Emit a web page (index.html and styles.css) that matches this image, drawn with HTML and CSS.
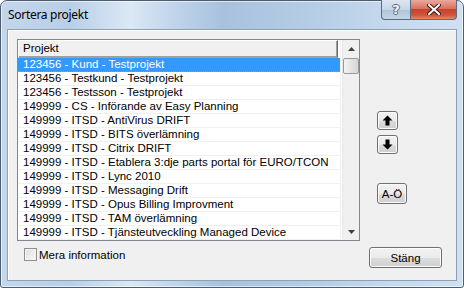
FILE: index.html
```html
<!DOCTYPE html>
<html>
<head>
<meta charset="utf-8">
<link rel="stylesheet" href="styles.css">
</head>
<body>
<div class="window">
  <div class="titlebar">
    <span class="title">Sortera projekt</span>
    <div class="caption-btns">
      <div class="cbtn help">?</div>
      <div class="cbtn close">
        <svg width="14" height="11" viewBox="0 0 14 11"><path d="M2 1 L12 10 M12 1 L2 10" stroke="#3a1a14" stroke-width="4" stroke-linecap="square"/><path d="M2 1 L12 10 M12 1 L2 10" stroke="#ffffff" stroke-width="2" stroke-linecap="square"/></svg>
      </div>
    </div>
  </div>
  <div class="client">
    <div class="top">
      <div class="listbox">
        <div class="listmain">
          <div class="header"><span>Projekt</span></div>
          <div class="rows">
            <div class="row sel">123456 - Kund - Testprojekt</div>
            <div class="row">123456 - Testkund - Testprojekt</div>
            <div class="row">123456 - Testsson - Testprojekt</div>
            <div class="row">149999 - CS - Införande av Easy Planning</div>
            <div class="row">149999 - ITSD - AntiVirus DRIFT</div>
            <div class="row">149999 - ITSD - BITS överlämning</div>
            <div class="row">149999 - ITSD - Citrix DRIFT</div>
            <div class="row">149999 - ITSD - Etablera 3:dje parts portal för EURO/TCON</div>
            <div class="row">149999 - ITSD - Lync 2010</div>
            <div class="row">149999 - ITSD - Messaging Drift</div>
            <div class="row">149999 - ITSD - Opus Billing Improvment</div>
            <div class="row">149999 - ITSD - TAM överlämning</div>
            <div class="row">149999 - ITSD - Tjänsteutveckling Managed Device</div>
          </div>
        </div>
        <div class="vscroll">
          <div class="sarrow"><svg width="7" height="4" viewBox="0 0 7 4"><path d="M0 4 L3.5 0 L7 4 Z" fill="#404040"/></svg></div>
          <div class="thumb"></div>
          <div class="track"></div>
          <div class="sarrow"><svg width="7" height="4" viewBox="0 0 7 4"><path d="M0 0 L3.5 4 L7 0 Z" fill="#404040"/></svg></div>
        </div>
      </div>
      <div class="side">
        <div class="btn arrowbtn">
          <svg width="11" height="11" viewBox="0 0 11 11"><path d="M5.5 0.5 L10.5 5.5 L7.5 5.5 L7.5 10.5 L3.5 10.5 L3.5 5.5 L0.5 5.5 Z" fill="#000"/></svg>
        </div>
        <div class="btn arrowbtn">
          <svg width="11" height="11" viewBox="0 0 11 11"><path d="M5.5 10.5 L10.5 5.5 L7.5 5.5 L7.5 0.5 L3.5 0.5 L3.5 5.5 L0.5 5.5 Z" fill="#000"/></svg>
        </div>
        <div class="btn azbtn">A-Ö</div>
      </div>
    </div>
    <div class="bottom">
      <label class="check"><span class="box"></span><span>Mera information</span></label>
      <div class="btn close-btn">Stäng</div>
    </div>
  </div>
</div>
</body>
</html>
```

FILE: styles.css
```css
* { box-sizing: border-box; }
html, body { margin: 0; padding: 0; }
body { width: 464px; height: 288px; overflow: hidden; background: #fff; }

.window {
  width: 464px;
  height: 288px;
  border: 1px solid #4c5d70;
  border-radius: 7px 7px 3px 3px;
  background:
    linear-gradient(to right, #c3d6eb 0%, #b9cfe7 15%, #dbe8f5 28%, #c4d7ec 36%, #a8c2de 48%, #b3cbe4 65%, #c6d9ee 85%, #d0e0f1 100%);
  box-shadow: inset 0 0 0 1px rgba(255,255,255,0.6);
  display: flex;
  flex-direction: column;
  padding: 0 6px 6px 6px;
  font-family: "Liberation Sans", Arial, sans-serif;
}

.titlebar {
  height: 28px;
  display: flex;
  align-items: flex-start;
  flex: none;
}
.title {
  font-family: "Noto Sans", "Open Sans", sans-serif;
  font-size: 12px;
  letter-spacing: -0.3px;
  color: #000;
  margin-top: 5px;
  margin-left: 1px;
}
.caption-btns {
  margin-left: auto;
  margin-right: 0;
  display: flex;
  margin-top: -1px;
}
.cbtn {
  height: 20px;
  border: 1px solid #5a6b7e;
  border-top: none;
  display: flex;
  align-items: center;
  justify-content: center;
}
.help {
  width: 29px;
  border-radius: 0 0 0 4px;
  border-right: none;
  background: linear-gradient(to bottom, #dce6f1 0%, #c7d6e7 50%, #b0c3d8 51%, #c4d4e6 100%);
  font-family: "DejaVu Sans", sans-serif;
  font-weight: bold;
  font-size: 13px;
  color: #f4f6f8;
  text-shadow: 0 0 1px #5a6a7c, 1px 0 0 #5a6a7c, -1px 0 0 #5a6a7c, 0 1px 0 #5a6a7c, 0 -1px 0 #5a6a7c;
}
.close {
  width: 47px;
  border-radius: 0 0 4px 0;
  background: linear-gradient(to bottom, #e9a99c 0%, #d9725f 45%, #c8432c 50%, #d0543a 80%, #e08a6c 100%);
}

.client {
  flex: 1;
  background: #f0f0f0;
  border: 1px solid #8ca0b6;
  box-shadow: inset 1px 1px 0 #fff;
  padding: 9px 14px 0 9px;
  display: flex;
  flex-direction: column;
  font-size: 11.5px;
}

.top {
  display: flex;
  align-items: flex-start;
}

.listbox {
  width: 343px;
  height: 202px;
  border: 1px solid #828790;
  background: #fff;
  display: flex;
  flex: none;
}
.listmain {
  width: 324px;
  display: flex;
  flex-direction: column;
  border-right: 1px solid #f0f0f0;
}
.header {
  height: 18px;
  background: #f0f0f0;
  border-top: 1px solid #fff;
  border-left: 1px solid #fff;
  border-right: 1px solid #696969;
  border-bottom: 1px solid #a0a0a0;
  box-shadow: inset -1px -1px 0 #a0a0a0;
  width: 320px;
  padding-left: 4px;
  line-height: 15px;
  color: #000;
}
.rows { flex: 1; }
.row {
  height: 14px;
  line-height: 13px;
  padding-left: 5px;
  border-bottom: 1px solid #f0f0f0;
  white-space: nowrap;
  overflow: hidden;
  color: #000;
}
.row.sel {
  background: #3399ff;
  color: #fff;
  border-bottom: 1px dotted #e08a40;
}

.vscroll {
  width: 17px;
  margin-left: 1px;
  display: flex;
  flex-direction: column;
  background: #f0f0f0;
  border-left: 1px solid #e6e6e6;
}
.sarrow {
  height: 17px;
  display: flex;
  align-items: center;
  justify-content: center;
  flex: none;
}
.thumb {
  height: 16px;
  margin: 1px 0 0 0;
  border: 1px solid #9a9a9a;
  border-radius: 2px;
  background: linear-gradient(to right, #f4f4f4, #e3e3e3 50%, #d6d6d6);
  flex: none;
}
.track { flex: 1; }

.side {
  margin-left: 17px;
  display: flex;
  flex-direction: column;
  align-items: flex-start;
  padding-top: 72px;
}

.btn {
  border: 1px solid #707070;
  border-radius: 3px;
  background: linear-gradient(to bottom, #f2f2f2 0%, #ebebeb 50%, #dddddd 51%, #cfcfcf 100%);
  box-shadow: inset 0 0 0 1px #fcfcfc;
  display: flex;
  align-items: center;
  justify-content: center;
  color: #000;
}
.arrowbtn {
  width: 21px;
  height: 19px;
  margin-bottom: 5px;
}
.azbtn {
  width: 30px;
  height: 21px;
  margin-top: 24px;
  font-size: 11.5px;
}

.bottom {
  display: flex;
  align-items: flex-start;
  margin-top: 6px;
}
.check {
  display: flex;
  align-items: center;
  margin-left: 7px;
  margin-top: 1px;
  color: #000;
}
.box {
  width: 13px;
  height: 13px;
  border: 1px solid #8f8f8f;
  background: linear-gradient(135deg, #dcdcdc, #fbfbfb);
  box-shadow: inset 0 0 0 1px #f4f4f4;
  margin-right: 2px;
}
.close-btn {
  margin-left: auto;
  width: 73px;
  height: 21px;
  font-size: 11.5px;
}
```
